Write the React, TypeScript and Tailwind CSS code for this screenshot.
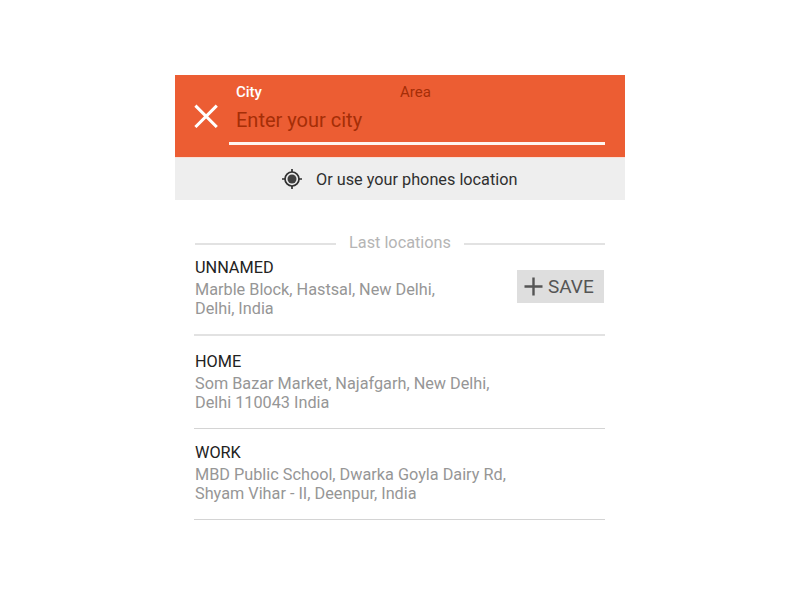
import React from "react";

const places = [
  { name: "UNNAMED", lines: ["Marble Block, Hastsal, New Delhi,", "Delhi, India"], save: true, box: "h-[78px] border-b-2 border-[#e2e2e2]" },
  { name: "HOME", lines: ["Som Bazar Market, Najafgarh, New Delhi,", "Delhi 110043 India"], save: false, box: "h-[93px] pt-[16px] border-b border-[#d4d4d4]" },
  { name: "WORK", lines: ["MBD Public School, Dwarka Goyla Dairy Rd,", "Shyam Vihar - II, Deenpur, India"], save: false, box: "h-[91px] pt-[14px] border-b border-[#d4d4d4]" },
];

export default function App() {
  return (
    <div className="h-[600px] w-[800px] overflow-hidden bg-white pt-[75px] font-[Roboto,sans-serif]">
      <div className="mx-auto w-[450px]">
        <header className="flex h-[82px] bg-[#ec5d33]">
          <svg className="mt-[29px] ml-[19px] h-6 w-6 shrink-0" viewBox="0 0 24 24" stroke="#fff" strokeWidth="3">
            <path d="M1.4 1.6 22.8 23M22.8 1.6 1.4 23" />
          </svg>
          <div className="ml-[11px] h-[70px] w-[376px] border-b-[3px] border-[#fff5ef] pt-[8px] pl-[7px]">
            <div className="flex text-[15px] leading-[18px]">
              <span className="w-[164px] font-medium text-white">City</span>
              <span className="text-[#a52e07]">Area</span>
            </div>
            <div className="mt-[7px] text-[20px] leading-[25px] text-[#a52e07]">Enter your city</div>
          </div>
        </header>
        <div className="flex h-[43px] items-center border-t border-[#f8dfd6] bg-[#eeeeee] pl-[106px] text-[16.25px] text-[#303030]">
          <svg className="mr-[13px] mb-px h-[22px] w-[22px]" viewBox="0 0 22 22" stroke="#303030" fill="none">
            <circle cx="11" cy="11" r="7" strokeWidth="1.7" />
            <circle cx="11" cy="11" r="4.5" fill="#404040" stroke="none" />
            <path strokeWidth="1.7" d="M11 1v3M11 18v3M1 11h3M18 11h3" />
          </svg>
          <span className="pt-[2px]">Or use your phones location</span>
        </div>
        <main className="mx-5 pt-[33px]">
          <div className="flex h-[20px] items-center text-[16.25px] text-[#b5b5b5]">
            <span className="mt-[2px] h-[2px] w-[141px] bg-[#e2e2e2]" />
            <span className="flex-1 text-center whitespace-nowrap">Last locations</span>
            <span className="mt-[2px] h-[2px] w-[141px] bg-[#e2e2e2]" />
          </div>
          <div className="-ml-px pt-[5px]">
            {places.map((p) => (
              <section key={p.name} className={`flex justify-between pl-px ${p.box}`}>
                <div className="text-[16.25px] leading-[19px] text-[#969696]">
                  <h2 className="mb-[3px] text-[#222]">{p.name}</h2>
                  {p.lines.map((l) => (
                    <p key={l} className="whitespace-nowrap">{l}</p>
                  ))}
                </div>
                {p.save && (
                  <button className="mt-[12px] mr-[1px] flex h-[33px] w-[87px] items-center bg-[#dedede] pt-px pl-[7px] text-[19px] text-[#555]">
                    <svg className="-mt-px mr-[5px] h-[19px] w-[19px]" viewBox="0 0 19 19" stroke="#555" strokeWidth="2.4">
                      <path d="M9.5 0.5v18M.5 9.5h18" />
                    </svg>
                    SAVE
                  </button>
                )}
              </section>
            ))}
          </div>
        </main>
      </div>
    </div>
  );
}
